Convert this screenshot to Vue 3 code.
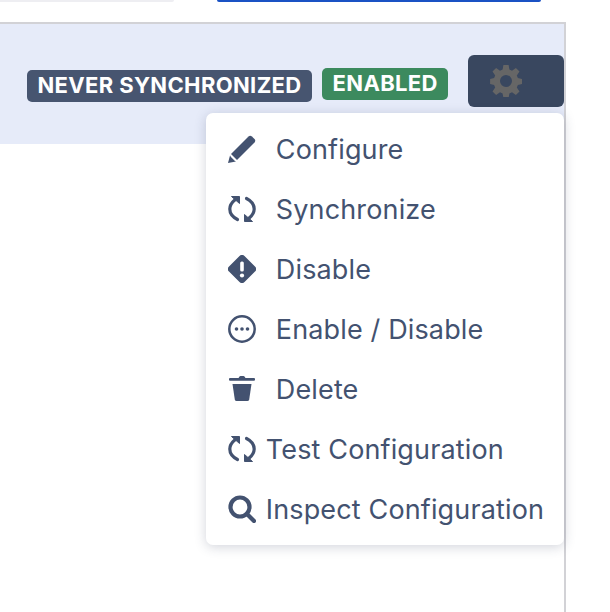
<script setup>
const badges = [
  { text: "NEVER SYNCHRONIZED", kind: "dark" },
  { text: "ENABLED", kind: "green" },
];

const items = [
  { label: "Configure", icon: "pencil" },
  { label: "Synchronize", icon: "sync" },
  { label: "Disable", icon: "diamond" },
  { label: "Enable / Disable", icon: "dots" },
  { label: "Delete", icon: "trash" },
  { label: "Test Configuration", icon: "sync", tight: true },
  { label: "Inspect Configuration", icon: "search", tight: true },
];
</script>

<template>
  <div class="page">
    <div class="top-strip">
      <div class="strip-gray"></div>
      <div class="strip-blue"></div>
    </div>
    <section class="panel">
      <header class="panel-head">
        <span v-for="b in badges" :key="b.text" class="badge" :class="b.kind">{{ b.text }}</span>
        <div class="dropdown">
          <button class="gear-btn" type="button">
            <svg class="gear" viewBox="0 0 32 32" width="32" height="32">
              <path
                fill="#666"
                fill-rule="evenodd"
                d="M13.400 0h5.200l.8 4.600 2.600 1.100 3.900-2.700 3.600 3.600-2.700 3.900 1.100 2.600 4.100.8v5.200l-4.100.8-1.100 2.600 2.700 3.900-3.600 3.600-3.900-2.700-2.600 1.100-.8 4.600h-5.200l-.8-4.600-2.600-1.100-3.900 2.700-3.600-3.600 2.700-3.900-1.100-2.600-4-.8v-5.200l4-.8 1.100-2.600-2.700-3.900 3.600-3.600 3.900 2.700 2.600-1.100zM16 10a6 6 0 1 0 0 12 6 6 0 0 0 0-12z"
              />
            </svg>
          </button>
          <ul class="menu">
            <li v-for="item in items" :key="item.label" class="menu-item" :class="{ tight: item.tight }">
              <svg class="icon" viewBox="0 0 28 28" width="28" height="28">
                <template v-if="item.icon === 'pencil'">
                  <path d="M20.500 1.500a2.500 2.500 0 0 1 3.400 0l2.600 2.600a2.500 2.500 0 0 1 0 3.400L9 25 3 19z" fill="currentColor" />
                  <path d="M2 20.500l6 6L0 28z" fill="currentColor" />
                  <path d="M3 21l5 5" stroke="#fff" stroke-width="1.400" fill="none" />
                </template>
                <template v-else-if="item.icon === 'sync'">
                  <path d="M6.800 5C3.800 7.500 1.800 10.500 1.800 14c0 4 2.700 8 7.700 10.500" fill="none" stroke="currentColor" stroke-width="3.200" stroke-linecap="round" />
                  <path d="M3.500 1.500h8v7z" fill="currentColor" stroke="currentColor" stroke-width="1" stroke-linejoin="round" />
                  <path d="M18.500 3.500c5 2.500 7.700 6.500 7.700 10.500 0 3.500-2 6.500-5 9" fill="none" stroke="currentColor" stroke-width="3.200" stroke-linecap="round" />
                  <path d="M24.500 26.500h-8v-7z" fill="currentColor" stroke="currentColor" stroke-width="1" stroke-linejoin="round" />
                </template>
                <template v-else-if="item.icon === 'diamond'">
                  <path d="M11.500 1a3.500 3.500 0 0 1 5 0l10.500 10.500a3.500 3.500 0 0 1 0 5L16.500 27a3.500 3.500 0 0 1-5 0L1 16.500a3.500 3.500 0 0 1 0-5z" fill="currentColor" />
                  <rect x="12.200" y="6.500" width="3.600" height="10" rx="1.500" fill="#fff" />
                  <circle cx="14" cy="20.500" r="2.100" fill="#fff" />
                </template>
                <template v-else-if="item.icon === 'dots'">
                  <circle cx="14" cy="14" r="12.700" fill="none" stroke="currentColor" stroke-width="2.500" />
                  <circle cx="8.500" cy="14" r="1.800" fill="currentColor" />
                  <circle cx="14" cy="14" r="1.800" fill="currentColor" />
                  <circle cx="19.500" cy="14" r="1.800" fill="currentColor" />
                </template>
                <template v-else-if="item.icon === 'trash'">
                  <path d="M2 4h8.500l1-1.500q.4-.5 1-.5h3q.6 0 1 .5l1 1.500H26q1 0 1 1v.7q0 1-1 1H2q-1 0-1-1V5q0-1 1-1z" transform="translate(0 -1)" fill="currentColor" />
                  <path d="M4.500 9h19l-2.300 15.500q-.3 1.500-1.800 1.500H8.600q-1.500 0-1.800-1.500z" fill="currentColor" />
                </template>
                <template v-else>
                  <circle cx="12" cy="12" r="9.500" fill="none" stroke="currentColor" stroke-width="4.200" />
                  <path d="M19 19l7 7" stroke="currentColor" stroke-width="4.200" stroke-linecap="round" />
                </template>
              </svg>
              <span>{{ item.label }}</span>
            </li>
          </ul>
        </div>
      </header>
    </section>
  </div>
</template>

<style>
html,
body {
  margin: 0;
  background: #fff;
  overflow: hidden;
}
</style>

<style scoped>
.page {
  width: 610px;
  height: 612px;
  font-family: Inter, "Liberation Sans", sans-serif;
  display: flex;
  flex-direction: column;
}

.top-strip {
  display: flex;
  gap: 43px;
  height: 22px;
  flex-shrink: 0;
}

.strip-gray {
  width: 174px;
  height: 2px;
  background: #eeeef2;
  border-radius: 0 0 4px 0;
}

.strip-blue {
  width: 324px;
  height: 2px;
  background: #1a52c4;
  border-radius: 0 0 4px 4px;
}

.panel {
  width: 566px;
  flex: 1;
  box-sizing: border-box;
  border-top: 2px solid #d2d2d6;
  border-right: 2px solid #d2d2d6;
}

.panel-head {
  height: 120px;
  box-sizing: border-box;
  padding: 31px 0 0 27px;
  background: #e6ebf9;
  display: flex;
  align-items: flex-start;
}

.badge {
  height: 32px;
  line-height: 31px;
  padding: 0 10.5px;
  border-radius: 5px;
  color: #fff;
  font-size: 22px;
  font-weight: 700;
  letter-spacing: 0.35px;
  white-space: nowrap;
}

.badge.dark {
  background: #475570;
  margin-top: 15px;
  margin-right: 10px;
}

.badge.green {
  background: #3c8a5e;
  margin-top: 13px;
  margin-right: 20px;
}

.dropdown {
  position: relative;
}

.gear-btn {
  display: flex;
  align-items: center;
  width: 96px;
  height: 52px;
  padding: 0 0 0 22px;
  border: none;
  border-radius: 6px;
  background: #39475f;
}

.menu {
  position: absolute;
  top: 58px;
  right: 0;
  width: 358px;
  box-sizing: border-box;
  margin: 0;
  padding: 6px 0;
  list-style: none;
  background: #fff;
  border-radius: 7px;
  box-shadow: 0 2px 12px rgba(50, 60, 90, 0.22);
  color: #435270;
}

.menu-item {
  display: flex;
  align-items: center;
  height: 60px;
  padding-left: 22px;
  font-size: 27px;
  letter-spacing: 0.14px;
  white-space: nowrap;
}

.icon {
  flex-shrink: 0;
  margin-right: 19.5px;
}

.menu-item.tight .icon {
  margin-right: 9.5px;
}
</style>
